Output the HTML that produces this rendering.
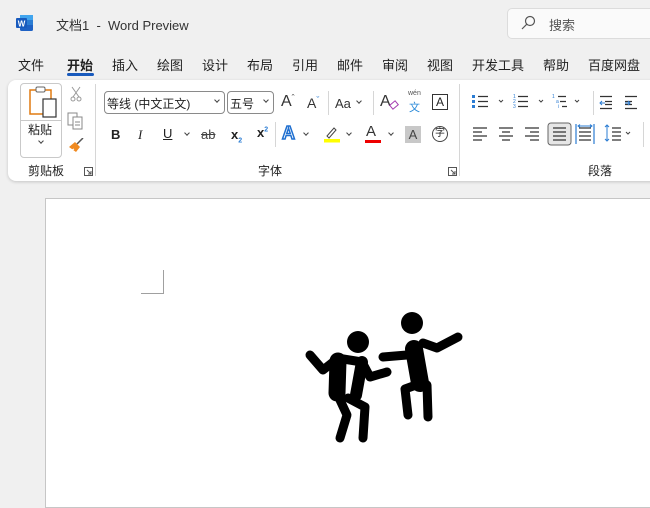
<!DOCTYPE html>
<html><head><meta charset="utf-8">
<style>
*{margin:0;padding:0;box-sizing:border-box}
body{width:650px;height:493px;overflow:hidden;background:#f0f0f0;font-family:"Liberation Sans","Noto Sans CJK SC",sans-serif;color:#222;position:relative}
.a{position:absolute;white-space:nowrap}
.t{font-size:13px}
.s{font-size:12px}
.sep{position:absolute;width:1px;background:#d6d6d6}
.chev{position:absolute;width:5px;height:5px;border-right:1px solid #444;border-bottom:1px solid #444;transform:rotate(45deg)}
</style></head><body>
<svg class="a" style="left:16px;top:14px" width="18" height="18" viewBox="0 0 18 18">
<rect x="4" y="1" width="13" height="16" rx="1.5" fill="#1e61c4"/><rect x="4" y="1" width="13" height="5" fill="#41a5ee"/><rect x="4" y="6" width="13" height="5" fill="#2b7cd3"/>
<rect x="0" y="4" width="11" height="10" rx="1" fill="#185abd"/><text x="5.5" y="12.5" font-size="8" font-weight="bold" fill="#fff" text-anchor="middle" font-family="Liberation Sans">W</text></svg>
<div class="a t" style="left:56px;top:15px;color:#333">文档1&nbsp; - &nbsp;Word Preview</div>
<div class="a" style="left:507px;top:8px;width:150px;height:31px;background:#fafafa;border:1px solid #dcdcdc;border-radius:5px"></div>
<svg class="a" style="left:520px;top:15px" width="16" height="16"><circle cx="10" cy="6" r="4.5" fill="none" stroke="#555" stroke-width="1.2"/><line x1="6.8" y1="9.2" x2="2" y2="14" stroke="#555" stroke-width="1.2"/></svg>
<div class="a t" style="left:549px;top:15px;color:#555">搜索</div>
<div class="a t" style="left:18px;top:55px">文件</div>
<div class="a t" style="left:67px;top:55px;font-weight:bold">开始</div>
<div class="a" style="left:67px;top:73px;width:27px;height:3px;background:#185abd;border-radius:2px"></div>
<div class="a t" style="left:112px;top:55px">插入</div>
<div class="a t" style="left:157px;top:55px">绘图</div>
<div class="a t" style="left:202px;top:55px">设计</div>
<div class="a t" style="left:247px;top:55px">布局</div>
<div class="a t" style="left:292px;top:55px">引用</div>
<div class="a t" style="left:337px;top:55px">邮件</div>
<div class="a t" style="left:382px;top:55px">审阅</div>
<div class="a t" style="left:427px;top:55px">视图</div>
<div class="a t" style="left:472px;top:55px">开发工具</div>
<div class="a t" style="left:543px;top:55px">帮助</div>
<div class="a t" style="left:588px;top:55px">百度网盘</div>
<div class="a" style="left:8px;top:80px;width:660px;height:101px;background:#fff;border-radius:8px;box-shadow:0 1px 3px rgba(0,0,0,.18)"></div>
<div class="a" style="left:20px;top:83px;width:42px;height:75px;border:1px solid #c9c9c9;border-radius:4px"></div>
<div class="a" style="left:21px;top:120px;width:40px;height:1px;background:#c9c9c9"></div>
<svg class="a" style="left:27px;top:85px" width="32" height="34"><rect x="3" y="5" width="21" height="24" fill="#fff" stroke="#e07a10" stroke-width="1.5"/><rect x="9" y="2" width="9" height="5" rx="1.5" fill="#fff" stroke="#666"/><rect x="16" y="14" width="13" height="18" fill="#fff" stroke="#333" stroke-width="1.2"/></svg>
<div class="a s" style="left:28px;top:121px">粘贴</div>
<div class="chev" style="left:39px;top:139px;width:4px;height:4px"></div>
<svg class="a" style="left:69px;top:86px" width="14" height="16"><path d="M3 1L10 11M11 1L4 11" stroke="#999" fill="none"/><circle cx="4" cy="13" r="2" fill="none" stroke="#999"/><circle cx="10" cy="13" r="2" fill="none" stroke="#999"/></svg>
<svg class="a" style="left:67px;top:112px" width="18" height="18"><rect x="1" y="1" width="9" height="12" fill="#fff" stroke="#888"/><rect x="6" y="5" width="9" height="12" fill="#fff" stroke="#888"/><path d="M8 10h5M8 13h5" stroke="#888"/></svg>
<svg class="a" style="left:67px;top:138px" width="18" height="16"><path d="M10 6l6-6" stroke="#555" stroke-width="1.5"/><path d="M2 9l6-5 5 5-4 5z" fill="#f08a20"/><path d="M3 13l4-2" stroke="#fff"/></svg>
<div class="a s" style="left:28px;top:162px">剪贴板</div>
<svg class="a" style="left:84px;top:167px" width="9" height="9"><path d="M0.5 0.5h8v8h-8z M3 3l4 4M7 4v3h-3" fill="none" stroke="#555"/></svg>
<div class="sep" style="left:95px;top:84px;height:92px"></div>
<div class="a" style="left:104px;top:91px;width:121px;height:23px;border:1px solid #8a8a8a;border-radius:4px"></div>
<div class="a s" style="left:107px;top:95px">等线 (中文正文)</div>
<div class="chev" style="left:215px;top:98px;width:4px;height:4px"></div>
<div class="a" style="left:227px;top:91px;width:47px;height:23px;border:1px solid #8a8a8a;border-radius:4px"></div>
<div class="a s" style="left:230px;top:95px">五号</div>
<div class="chev" style="left:264px;top:98px;width:4px;height:4px"></div>
<div class="a" style="left:281px;top:93px;font-size:16px;color:#333">A<span style="font-size:9px;vertical-align:top">ˆ</span></div>
<div class="a" style="left:307px;top:95px;font-size:14px;color:#333">A<span style="font-size:9px;vertical-align:top;color:#2b7cd3">ˇ</span></div>
<div class="sep" style="left:328px;top:91px;height:24px"></div>
<div class="a" style="left:335px;top:96px;font-size:13px;color:#333">Aa</div>
<div class="chev" style="left:357px;top:99px;width:4px;height:4px"></div>
<div class="sep" style="left:373px;top:91px;height:24px"></div>
<div class="a" style="left:380px;top:93px;font-size:16px;color:#333">A</div>
<div class="a" style="left:390px;top:102px;width:8px;height:6px;border:1.5px solid #a43bb0;transform:rotate(-40deg)"></div>
<div class="a" style="left:408px;top:90px;font-size:7px;color:#555">wén</div>
<div class="a" style="left:409px;top:99px;font-size:11px;color:#2b8ad8">文</div>
<div class="a" style="left:432px;top:94px;width:16px;height:16px;border:1px solid #333;font-size:12px;text-align:center;line-height:14px">A</div>
<div class="a" style="left:111px;top:127px;font-size:13px;font-weight:bold">B</div>
<div class="a" style="left:138px;top:127px;font-size:13px;font-style:italic;font-family:'Liberation Serif'">I</div>
<div class="a" style="left:163px;top:126px;font-size:13px;text-decoration:underline">U</div>
<div class="chev" style="left:185px;top:131px;width:4px;height:4px"></div>
<div class="a" style="left:201px;top:127px;font-size:13px;text-decoration:line-through;color:#444">ab</div>
<div class="a" style="left:231px;top:127px;font-size:13px;font-weight:bold">x<sub style="font-size:7px;color:#2b7cd3">2</sub></div>
<div class="a" style="left:257px;top:125px;font-size:13px;font-weight:bold">x<sup style="font-size:7px;color:#2b7cd3">2</sup></div>
<div class="sep" style="left:275px;top:122px;height:25px"></div>
<div class="a" style="left:282px;top:123px;font-size:18px;font-weight:bold;color:#fff;-webkit-text-stroke:1.5px #1f6fd0">A</div>
<div class="chev" style="left:304px;top:131px;width:4px;height:4px"></div>
<svg class="a" style="left:323px;top:125px" width="18" height="18"><path d="M4 11l7-8 2 2-7 8z" fill="none" stroke="#444"/><rect x="1" y="14" width="16" height="3.5" fill="#ffff00"/></svg>
<div class="chev" style="left:347px;top:131px;width:4px;height:4px"></div>
<div class="a" style="left:366px;top:123px;font-size:15px;color:#333">A</div>
<div class="a" style="left:365px;top:140px;width:16px;height:3px;background:#e00"></div>
<div class="chev" style="left:389px;top:131px;width:4px;height:4px"></div>
<div class="a" style="left:405px;top:126px;width:16px;height:17px;background:#c8c8c8;font-size:13px;text-align:center;line-height:17px;color:#444">A</div>
<div class="a" style="left:432px;top:126px;width:16px;height:16px;border:1px solid #444;border-radius:50%;font-size:10px;text-align:center;line-height:14px">字</div>
<div class="a s" style="left:258px;top:162px">字体</div>
<svg class="a" style="left:448px;top:167px" width="9" height="9"><path d="M0.5 0.5h8v8h-8z M3 3l4 4M7 4v3h-3" fill="none" stroke="#555"/></svg>
<div class="sep" style="left:459px;top:84px;height:92px"></div>
<svg class="a" style="left:470px;top:93px" width="180" height="60">
<g fill="#2b7cd3"><rect x="2" y="2" width="3" height="3"/><rect x="2" y="7" width="3" height="3"/><rect x="2" y="12" width="3" height="3"/></g>
<g stroke="#333" stroke-width="1.2"><path d="M8 3.5h10M8 8.5h10M8 13.5h10"/><path d="M48 3.5h10M48 8.5h10M48 13.5h10"/><path d="M88 3.5h8M90 8.5h6M92 13.5h5"/>
<path d="M130 3.5h12M135 8.5h7M135 11.5h7M130 15.5h12"/><path d="M155 3.5h12M155 8.5h7M155 11.5h7M155 15.5h12"/></g>
<g fill="#2b7cd3" font-size="5" font-family="Liberation Sans"><text x="43" y="5">1</text><text x="43" y="10">2</text><text x="43" y="15">3</text><text x="82" y="5">1</text><text x="86" y="10">a</text><text x="88" y="15">i</text></g>
<path d="M130 10h5M132 8l-2 2 2 2" stroke="#2b7cd3" fill="none"/><path d="M155 10h5M158 8l2 2-2 2" stroke="#2b7cd3" fill="none"/>
<path d="M29 7l2 2 2-2M69 7l2 2 2-2M105 7l2 2 2-2" stroke="#444" fill="none"/>
<g stroke="#333" stroke-width="1.2"><path d="M3 35h14M3 39h9M3 43h14M3 47h9"/><path d="M29 35h14M32 39h8M29 43h14M32 47h8"/><path d="M55 35h14M60 39h9M55 43h14M60 47h9"/></g>
<rect x="78" y="30" width="23" height="22" rx="3" fill="#e6e6e6" stroke="#666"/>
<path d="M83 35h13M83 39h13M83 43h13M83 47h13" stroke="#333" stroke-width="1.2"/>
<path d="M106 31v20M124 31v20" stroke="#2b7cd3" stroke-width="1.2"/><path d="M109 35h12M109 39h12M109 43h12M109 47h12" stroke="#333" stroke-width="1.2"/>
<path d="M108 33h14M110 31.5l-2 1.5 2 1.5M120 31.5l2 1.5-2 1.5" stroke="#2b7cd3" fill="none"/>
<path d="M137 32v16M135 34l2-2 2 2M135 46l2 2 2-2" stroke="#2b7cd3" fill="none"/><path d="M142 35h9M142 39h9M142 43h9M142 47h9" stroke="#333" stroke-width="1.2"/>
<path d="M156 39l2 2 2-2" stroke="#444" fill="none"/>
</svg>
<div class="sep" style="left:593px;top:91px;height:24px"></div>
<div class="sep" style="left:643px;top:122px;height:25px"></div>
<div class="a s" style="left:588px;top:162px">段落</div>
<div class="a" style="left:45px;top:198px;width:620px;height:310px;background:#fff;border:1px solid #c6c6c6"></div>
<div class="a" style="left:163px;top:270px;width:1px;height:24px;background:#a0a0a0"></div>
<div class="a" style="left:141px;top:293px;width:23px;height:1px;background:#a0a0a0"></div>
<svg class="a" style="left:290px;top:305px" width="190" height="150">
<g stroke="#000" stroke-linecap="round" stroke-linejoin="round" fill="none">
<circle cx="68" cy="37" r="11" fill="#000" stroke="none"/>
<path d="M20 50L33 65L47 54" stroke-width="9"/>
<path d="M47 53L72 57L80 72L97 67" stroke-width="9"/>
<path d="M48 56L47 88" stroke-width="17"/>
<path d="M72 57L66 90" stroke-width="12"/>
<path d="M50 95L57 110L50 133" stroke-width="9"/>
<path d="M58 93L75 102L73 133" stroke-width="9"/>
<circle cx="122" cy="18" r="11" fill="#000" stroke="none"/>
<path d="M93 52L117 50" stroke-width="9"/>
<path d="M124 44L130 78" stroke-width="18"/>
<path d="M133 38L147 43L168 32" stroke-width="9"/>
<path d="M126 80L115 84L118 110" stroke-width="9"/>
<path d="M137 80L138 112" stroke-width="9"/>
</g></svg>
</body></html>
